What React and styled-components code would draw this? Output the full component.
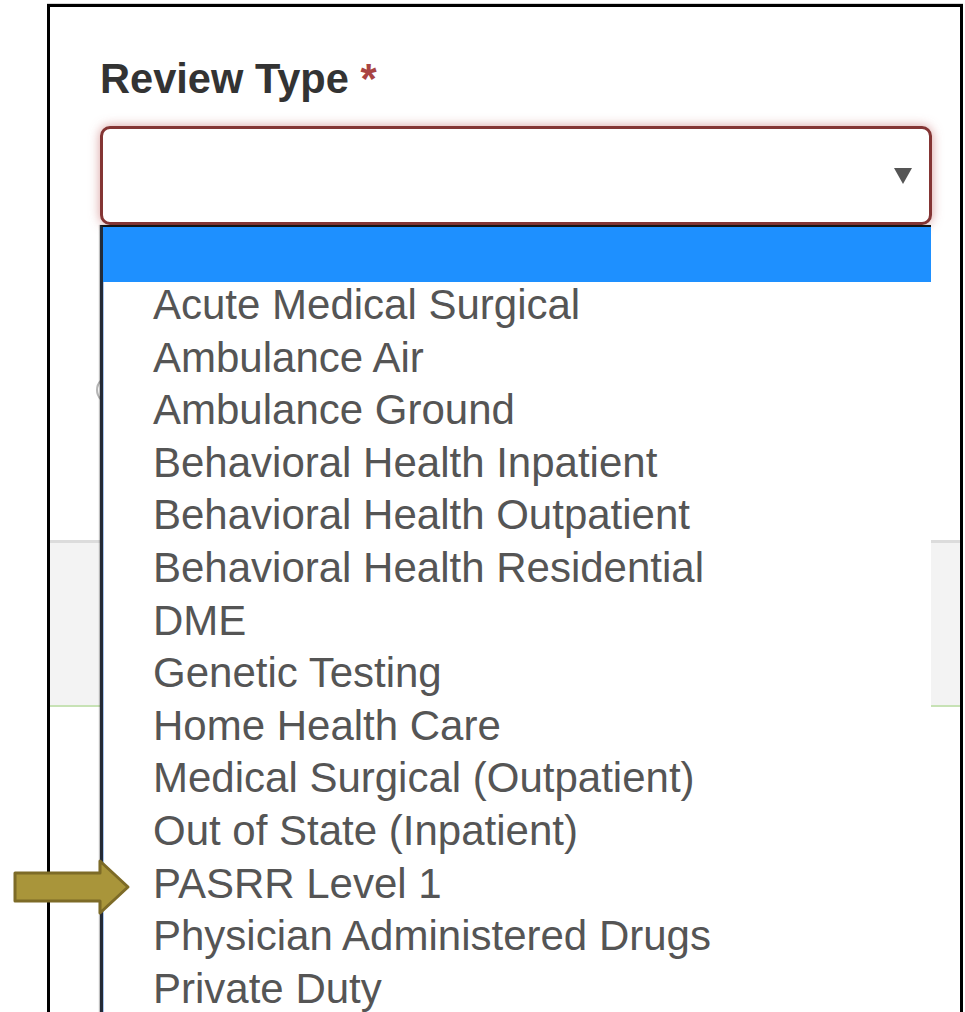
import React from "react";
import styled, { createGlobalStyle } from "styled-components";

const GlobalStyle = createGlobalStyle`
  html, body {
    margin: 0;
    padding: 0;
    background: #ffffff;
    overflow: hidden;
  }
  body {
    font-family: "Liberation Sans", Arial, Helvetica, sans-serif;
  }
`;

const Page = styled.div`
  padding: 4px 0 0 47px;
  width: 965px;
  box-sizing: border-box;
  position: relative;
`;

const Frame = styled.div`
  width: 916px;
  min-height: 1008px;
  box-sizing: border-box;
  border: 3px solid #000;
  border-bottom: none;
  box-shadow: 0 -1px 0 #d6d6d6;
  background: #fff;
`;

const FieldSection = styled.div`
  padding: 48px 28px 0 50px;
`;

const Label = styled.label`
  display: block;
  font-size: 41.6px;
  line-height: 47px;
  font-weight: 700;
  color: #333;
  margin-bottom: 24px;
`;

const Required = styled.span`
  color: #a94442;
`;

const SelectWrap = styled.div`
  position: relative;
  width: 832px;
`;

const SelectBox = styled.div`
  height: 99px;
  box-sizing: border-box;
  border: 3px solid #843534;
  border-radius: 10px;
  background: #fff;
  box-shadow: 0 0 11px rgba(206, 132, 131, 0.8);
  display: flex;
  align-items: center;
  justify-content: flex-end;
  padding-right: 17px;
`;

const Caret = styled.svg`
  width: 18px;
  height: 16px;
  fill: #555;
  margin-top: 1px;
`;

const OptionList = styled.ul`
  position: absolute;
  top: 100%;
  left: 0;
  width: 831px;
  margin: 0;
  padding: 0;
  list-style: none;
  background: #fff;
  border-top: 2px solid #151515;
  border-left: 3px solid #232a36;
  box-sizing: border-box;
  box-shadow: inset 1px 0 0 #a9c6ee, -1px 0 1px rgba(0, 0, 0, 0.25);
  z-index: 2;
`;

const Option = styled.li`
  height: ${(p) => (p.$blank ? "55px" : "52.6px")};
  line-height: 45px;
  padding-left: 50px;
  font-size: 42px;
  color: #555;
  white-space: nowrap;
  background: ${(p) => (p.$active ? "#1e90ff" : "transparent")};
`;

const ChoiceRow = styled.div`
  margin-top: 151px;
  margin-left: -4px;
  height: 28px;
  display: flex;
  align-items: center;
`;

const Radio = styled.span`
  width: 24px;
  height: 24px;
  border-radius: 50%;
  border: 2px solid #b5b5b5;
`;

const Band = styled.div`
  margin-top: 136px;
  height: 167px;
  box-sizing: border-box;
  background: #f3f3f3;
  border-top: 3px solid #dcdcdc;
  border-bottom: 2px solid #c7e2b5;
`;

const Pointer = styled.svg`
  position: absolute;
  left: 11px;
  top: 857px;
  width: 122px;
  height: 60px;
  z-index: 3;
`;

const reviewTypes = [
  "Acute Medical Surgical",
  "Ambulance Air",
  "Ambulance Ground",
  "Behavioral Health Inpatient",
  "Behavioral Health Outpatient",
  "Behavioral Health Residential",
  "DME",
  "Genetic Testing",
  "Home Health Care",
  "Medical Surgical (Outpatient)",
  "Out of State (Inpatient)",
  "PASRR Level 1",
  "Physician Administered Drugs",
  "Private Duty",
];

export default function App() {
  return (
    <>
      <GlobalStyle />
      <Page>
        <Frame>
          <FieldSection>
            <Label>
              Review Type <Required>*</Required>
            </Label>
            <SelectWrap>
              <SelectBox>
                <Caret viewBox="0 0 18 16">
                  <polygon points="0,0 18,0 9,16" />
                </Caret>
              </SelectBox>
              <OptionList>
                <Option $blank $active />
                {reviewTypes.map((t) => (
                  <Option key={t}>{t}</Option>
                ))}
              </OptionList>
            </SelectWrap>
            <ChoiceRow>
              <Radio />
            </ChoiceRow>
          </FieldSection>
          <Band />
        </Frame>
        <Pointer viewBox="0 0 122 60">
          <polygon
            points="4,16 89,16 89,4 117,30 89,56 89,44 4,44"
            fill="#a9953a"
            stroke="#7d6b27"
            strokeWidth="3"
            strokeLinejoin="round"
          />
        </Pointer>
      </Page>
    </>
  );
}
